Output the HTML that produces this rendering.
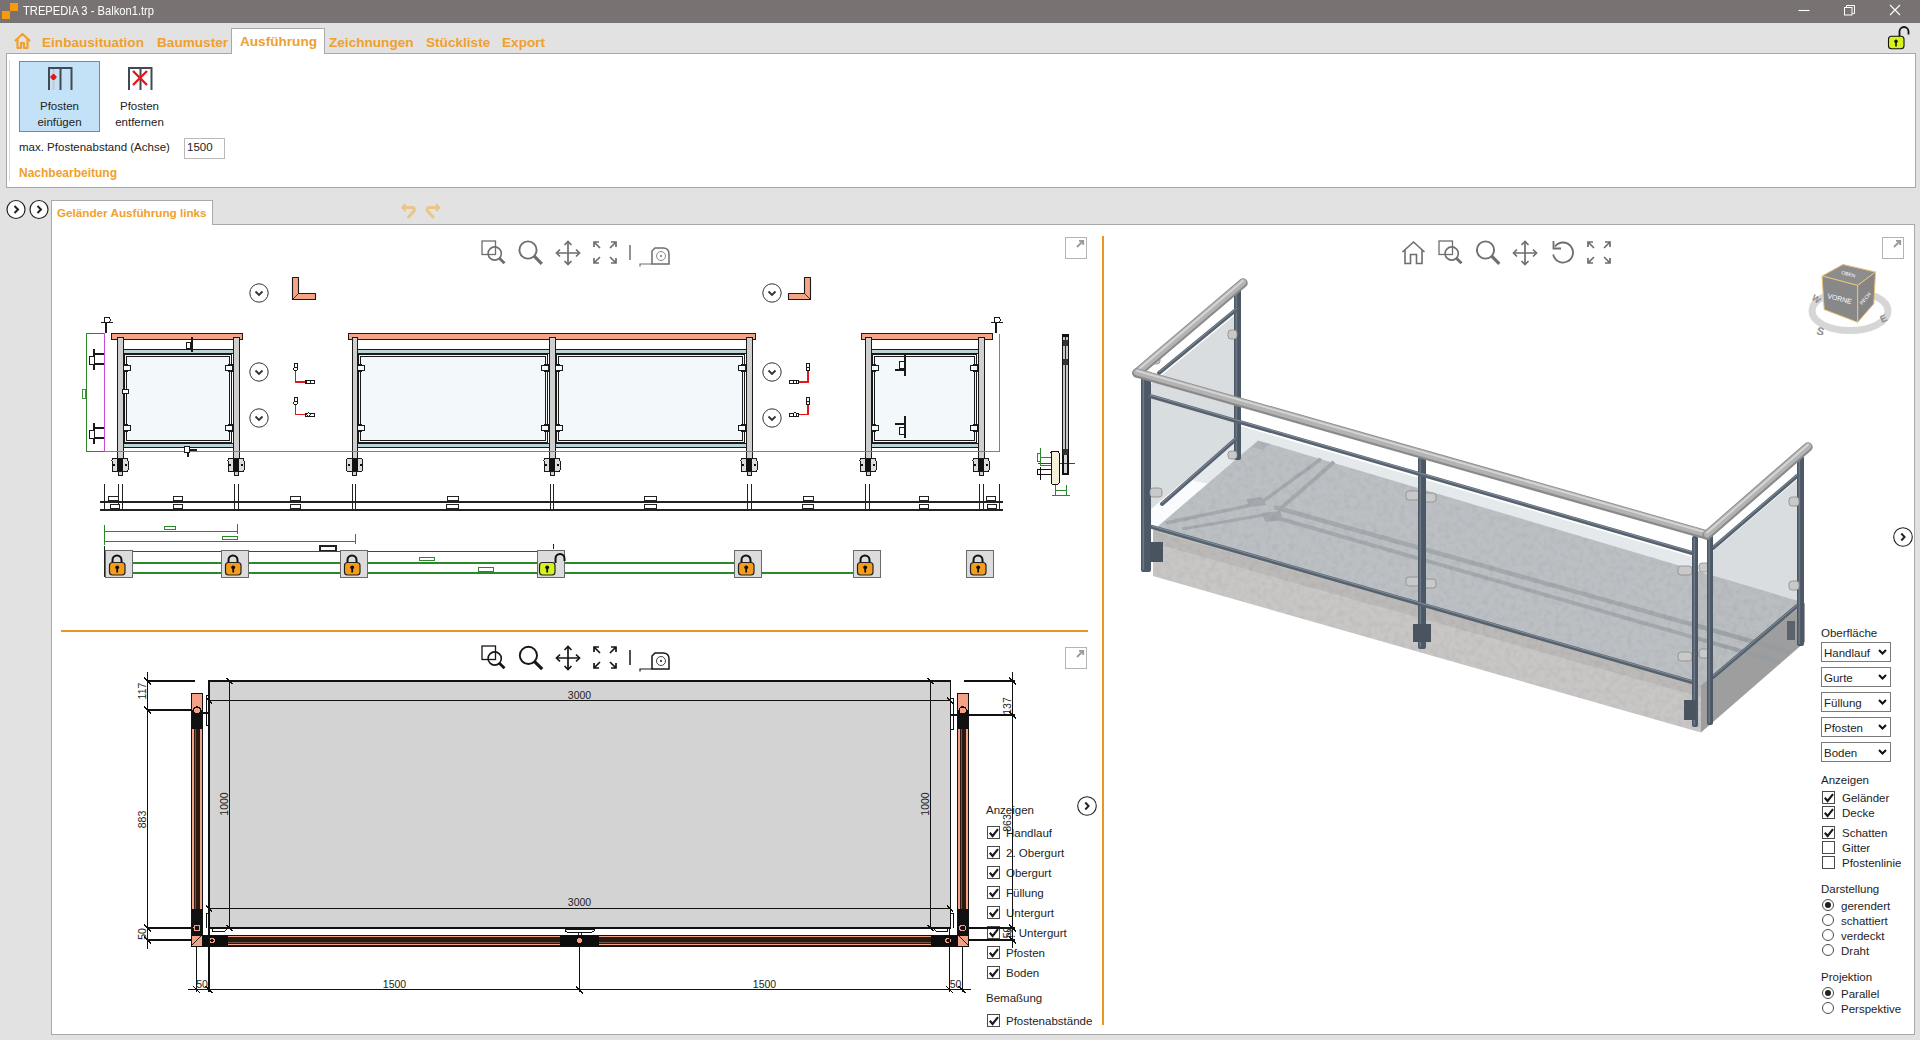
<!DOCTYPE html>
<html><head><meta charset="utf-8">
<style>
*{margin:0;padding:0;box-sizing:border-box}
html,body{width:1920px;height:1040px;overflow:hidden;background:#e2e2e2;font-family:"Liberation Sans",sans-serif;position:relative}
.abs{position:absolute}
#title{left:0;top:0;width:1920px;height:23px;background:#797272;color:#fff;font-size:13px}
#tabs{left:0;top:23px;width:1920px;height:30px}
.tab{position:absolute;top:12px;font-weight:bold;font-size:13.6px;color:#f0a02c;white-space:nowrap}
#ribbon{left:6px;top:53px;width:1910px;height:135px;background:#fff;border:1px solid #a9a9a9}
#doctab{left:51px;top:200px;width:162px;height:25px;background:#fff;border:1px solid #a9a9a9;border-bottom:none}
#main{left:51px;top:224px;width:1864px;height:811px;background:#fff;border:1px solid #a9a9a9}
.t{position:absolute;white-space:nowrap;font-size:12px;color:#222}
.l{position:absolute;white-space:nowrap;font-size:11.5px;line-height:14px;color:#1e1e1e}
.cb{position:absolute;width:13px;height:13px;border:1px solid #4a4a4a;background:#fff}
.combo{position:absolute;left:1821px;width:70px;height:20px;border:1px solid #7a7a7a;background:#fff}
.rb{position:absolute;width:12px;height:12px;border:1px solid #4d4d4d;border-radius:50%;background:#fff}
</style></head>
<body>
<div id="title" class="abs">
  <div class="abs" style="left:2px;top:11px;width:8px;height:8px;background:#f59a0f"></div>
  <div class="abs" style="left:10px;top:3px;width:8px;height:8px;background:#f59a0f"></div>
  <div class="abs" style="left:23px;top:4px;font-size:12.5px;transform:scaleX(0.894);transform-origin:0 0">TREPEDIA 3 - Balkon1.trp</div>
</div>
<div id="tabs" class="abs">
  <svg class="abs" style="left:13px;top:9px" width="19" height="18" viewBox="0 0 19 18"><path d="M2.5 8.5 L9.5 2 L16.5 8.5 M4.5 7 V16 H8 V11 H11 V16 H14.5 V7" fill="none" stroke="#f0a02c" stroke-width="2.2" stroke-linejoin="round" stroke-linecap="round"/></svg>
  <div class="tab" style="left:42px">Einbausituation</div>
  <div class="tab" style="left:157px">Baumuster</div>
  <div class="abs" style="left:231px;top:5px;width:94px;height:26px;background:#fff;border:1px solid #a9a9a9;border-bottom:none;z-index:2"></div>
  <div class="tab" style="left:240px;top:11px;z-index:3">Ausführung</div>
  <div class="tab" style="left:329px">Zeichnungen</div>
  <div class="tab" style="left:426px">Stückliste</div>
  <div class="tab" style="left:502px">Export</div>
</div>
<div id="ribbon" class="abs">
  <div class="abs" style="left:2px;top:6px;width:1px;height:121px;background:#ecd9a8"></div>
  <div class="abs" style="left:12px;top:7px;width:81px;height:71px;background:#c4e2f7;border:1px solid #5e8fba"></div>
  <svg class="abs" style="left:40px;top:12px" width="26" height="25" viewBox="0 0 26 25">
    <path d="M2 24 V2 H24.5 V24 M13.5 2 V24" fill="none" stroke="#414a52" stroke-width="2"/>
    <rect x="5.5" y="3" width="2" height="21" fill="#c7c7c7"/>
    <circle cx="6.5" cy="11" r="2.6" fill="#e8151b"/><rect x="3.5" y="10" width="6" height="2" fill="#e8151b"/><rect x="5.5" y="8" width="2" height="6" fill="#e8151b"/>
  </svg>
  <div class="t" style="left:12px;width:81px;text-align:center;top:44px;font-size:11.5px;line-height:16px">Pfosten<br>einfügen</div>
  <svg class="abs" style="left:120px;top:12px" width="26" height="25" viewBox="0 0 26 25">
    <path d="M2 24 V2 H24.5 V24 M13.5 2 V24" fill="none" stroke="#414a52" stroke-width="2"/>
    <path d="M6 5 L20 19 M20 5 L6 19" stroke="#e8151b" stroke-width="2.4"/>
  </svg>
  <div class="t" style="left:92px;width:81px;text-align:center;top:44px;font-size:11.5px;line-height:16px">Pfosten<br>entfernen</div>
  <div class="t" style="left:12px;top:87px;font-size:11.5px">max. Pfostenabstand (Achse)</div>
  <div class="abs" style="left:177px;top:84px;width:41px;height:21px;border:1px solid #b9b9b9;background:#fff"></div>
  <div class="t" style="left:180px;top:87px;font-size:11.5px">1500</div>
  <div class="t" style="left:12px;top:112px;font-size:12px;font-weight:bold;color:#f0a02c">Nachbearbeitung</div>
</div>
<div id="doctab" class="abs" style="z-index:2"><div class="abs" style="left:0;top:23px;width:160px;height:3px;background:#fff"></div>
  <div class="t" style="left:5px;top:5px;font-size:11.7px;font-weight:bold;color:#f0a02c">Geländer Ausführung links</div></div>
<svg class="abs" style="left:6px;top:199px" width="44" height="21" viewBox="0 0 44 21">
  <circle cx="10" cy="10.5" r="9" fill="#fff" stroke="#222" stroke-width="1.2"/><path d="M8.5 7 L12 10.5 L8.5 14" fill="none" stroke="#222" stroke-width="2"/>
  <circle cx="33" cy="10.5" r="9" fill="#fff" stroke="#222" stroke-width="1.2"/><path d="M31.5 7 L35 10.5 L31.5 14" fill="none" stroke="#222" stroke-width="2"/>
</svg>
<svg class="abs" style="left:398px;top:198px" width="46" height="22" viewBox="398 198 46 22">
  <path d="M403 207.5 H412 Q415.5 207.5 414 211 L408.5 217" fill="none" stroke="#eac489" stroke-width="3" stroke-linecap="round"/>
  <path d="M405.5 204 L402.5 207.5 L405.5 211" fill="none" stroke="#eac489" stroke-width="2"/>
  <path d="M438.5 207.5 H429.5 Q426 207.5 427.5 211 L433 217" fill="none" stroke="#eac489" stroke-width="3" stroke-linecap="round"/>
  <path d="M436 204 L439 207.5 L436 211" fill="none" stroke="#eac489" stroke-width="2"/>
</svg>
<div id="main" class="abs"></div>
<!--CHROME-->
<svg class="abs" style="left:1790px;top:0" width="130" height="56" viewBox="1790 0 130 56">
  <path d="M1798.5 10.5 H1809.5" stroke="#fff" stroke-width="1.1"/>
  <path d="M1846.5 7 V5.5 H1854.5 V13.5 H1852.5" fill="none" stroke="#fff" stroke-width="1"/>
  <rect x="1844.5" y="7.5" width="7.5" height="7.5" fill="none" stroke="#fff" stroke-width="1"/>
  <path d="M1890 5 L1900 15 M1900 5 L1890 15" stroke="#fff" stroke-width="1.1"/>
  <path d="M1899.5 37 V31.5 A4.5 4.5 0 0 1 1908.5 31.5 V34.5" fill="none" stroke="#111" stroke-width="1.8"/>
  <rect x="1888.5" y="36.3" width="15.5" height="12.5" rx="3" fill="#d7f21a" stroke="#111" stroke-width="1.1"/>
  <circle cx="1896" cy="41.3" r="1.7" fill="#111"/><rect x="1895.2" y="41.5" width="1.6" height="5" fill="#111"/>
</svg>
<div class="abs" style="left:61px;top:630px;width:1027px;height:2px;background:#e8961e"></div>
<div class="abs" style="left:1102px;top:236px;width:2px;height:789px;background:#e8961e"></div>
<svg class="abs" style="left:1065px;top:237px" width="22" height="22" viewBox="0 0 22 22"><rect x="0.5" y="0.5" width="21" height="21" fill="#fff" stroke="#b4b4b4"/><path d="M12 10 L18 4 M14 3.8 H18.2 V8" fill="none" stroke="#9a9a9a" stroke-width="1.8"/></svg>
<svg class="abs" style="left:1065px;top:647px" width="22" height="22" viewBox="0 0 22 22"><rect x="0.5" y="0.5" width="21" height="21" fill="#fff" stroke="#b4b4b4"/><path d="M12 10 L18 4 M14 3.8 H18.2 V8" fill="none" stroke="#9a9a9a" stroke-width="1.8"/></svg>
<svg class="abs" style="left:1882px;top:237px" width="22" height="22" viewBox="0 0 22 22"><rect x="0.5" y="0.5" width="21" height="21" fill="#fff" stroke="#b4b4b4"/><path d="M12 10 L18 4 M14 3.8 H18.2 V8" fill="none" stroke="#9a9a9a" stroke-width="1.8"/></svg>
<svg class="abs" style="left:1075.5px;top:794.5px" width="22" height="22" viewBox="0 0 22 22"><circle cx="11" cy="11" r="9.3" fill="#fff" stroke="#222" stroke-width="1.1"/><path d="M9.3 7.5 L12.6 11 L9.3 14.5" fill="none" stroke="#222" stroke-width="1.9"/></svg>
<svg class="abs" style="left:1892px;top:526px" width="22" height="22" viewBox="0 0 22 22"><circle cx="11" cy="11" r="9.3" fill="#fff" stroke="#222" stroke-width="1.1"/><path d="M9.3 7.5 L12.6 11 L9.3 14.5" fill="none" stroke="#222" stroke-width="1.9"/></svg>
<div class="l" style="left:1821px;top:626px;">Oberfläche</div>
<div class="combo" style="top:642px"></div><div class="l" style="left:1824px;top:646px;">Handlauf</div><svg class="abs" style="left:1878px;top:649px" width="9" height="6" viewBox="0 0 9 6"><path d="M1 1 L4.5 4.5 L8 1" fill="none" stroke="#111" stroke-width="2"/></svg>
<div class="combo" style="top:667px"></div><div class="l" style="left:1824px;top:671px;">Gurte</div><svg class="abs" style="left:1878px;top:674px" width="9" height="6" viewBox="0 0 9 6"><path d="M1 1 L4.5 4.5 L8 1" fill="none" stroke="#111" stroke-width="2"/></svg>
<div class="combo" style="top:692px"></div><div class="l" style="left:1824px;top:696px;">Füllung</div><svg class="abs" style="left:1878px;top:699px" width="9" height="6" viewBox="0 0 9 6"><path d="M1 1 L4.5 4.5 L8 1" fill="none" stroke="#111" stroke-width="2"/></svg>
<div class="combo" style="top:717px"></div><div class="l" style="left:1824px;top:721px;">Pfosten</div><svg class="abs" style="left:1878px;top:724px" width="9" height="6" viewBox="0 0 9 6"><path d="M1 1 L4.5 4.5 L8 1" fill="none" stroke="#111" stroke-width="2"/></svg>
<div class="combo" style="top:742px"></div><div class="l" style="left:1824px;top:746px;">Boden</div><svg class="abs" style="left:1878px;top:749px" width="9" height="6" viewBox="0 0 9 6"><path d="M1 1 L4.5 4.5 L8 1" fill="none" stroke="#111" stroke-width="2"/></svg>
<div class="l" style="left:1821px;top:773px;">Anzeigen</div>
<div class="cb" style="left:1822px;top:791px"><svg width="11" height="11" style="position:absolute;left:0;top:0" viewBox="0 0 11 11"><path d="M1.8 5.8 L4.6 9 L10 2.2" fill="none" stroke="#1a1a1a" stroke-width="2.1"/></svg></div>
<div class="l" style="left:1842px;top:791px;">Geländer</div>
<div class="cb" style="left:1822px;top:806px"><svg width="11" height="11" style="position:absolute;left:0;top:0" viewBox="0 0 11 11"><path d="M1.8 5.8 L4.6 9 L10 2.2" fill="none" stroke="#1a1a1a" stroke-width="2.1"/></svg></div>
<div class="l" style="left:1842px;top:806px;">Decke</div>
<div class="cb" style="left:1822px;top:826px"><svg width="11" height="11" style="position:absolute;left:0;top:0" viewBox="0 0 11 11"><path d="M1.8 5.8 L4.6 9 L10 2.2" fill="none" stroke="#1a1a1a" stroke-width="2.1"/></svg></div>
<div class="l" style="left:1842px;top:826px;">Schatten</div>
<div class="cb" style="left:1822px;top:841px"></div>
<div class="l" style="left:1842px;top:841px;">Gitter</div>
<div class="cb" style="left:1822px;top:856px"></div>
<div class="l" style="left:1842px;top:856px;">Pfostenlinie</div>
<div class="l" style="left:1821px;top:882px;">Darstellung</div>
<div class="rb" style="left:1822px;top:899px"><div style="position:absolute;left:2px;top:2px;width:6px;height:6px;border-radius:50%;background:#222"></div></div>
<div class="l" style="left:1841px;top:899px;">gerendert</div>
<div class="rb" style="left:1822px;top:914px"></div>
<div class="l" style="left:1841px;top:914px;">schattiert</div>
<div class="rb" style="left:1822px;top:929px"></div>
<div class="l" style="left:1841px;top:929px;">verdeckt</div>
<div class="rb" style="left:1822px;top:944px"></div>
<div class="l" style="left:1841px;top:944px;">Draht</div>
<div class="l" style="left:1821px;top:970px;">Projektion</div>
<div class="rb" style="left:1822px;top:987px"><div style="position:absolute;left:2px;top:2px;width:6px;height:6px;border-radius:50%;background:#222"></div></div>
<div class="l" style="left:1841px;top:987px;">Parallel</div>
<div class="rb" style="left:1822px;top:1002px"></div>
<div class="l" style="left:1841px;top:1002px;">Perspektive</div>
<div class="l" style="left:986px;top:803px;">Anzeigen</div>
<div class="cb" style="left:987px;top:826px"><svg width="11" height="11" style="position:absolute;left:0;top:0" viewBox="0 0 11 11"><path d="M1.8 5.8 L4.6 9 L10 2.2" fill="none" stroke="#1a1a1a" stroke-width="2.1"/></svg></div>
<div class="l" style="left:1006px;top:826px;">Handlauf</div>
<div class="cb" style="left:987px;top:846px"><svg width="11" height="11" style="position:absolute;left:0;top:0" viewBox="0 0 11 11"><path d="M1.8 5.8 L4.6 9 L10 2.2" fill="none" stroke="#1a1a1a" stroke-width="2.1"/></svg></div>
<div class="l" style="left:1006px;top:846px;">2. Obergurt</div>
<div class="cb" style="left:987px;top:866px"><svg width="11" height="11" style="position:absolute;left:0;top:0" viewBox="0 0 11 11"><path d="M1.8 5.8 L4.6 9 L10 2.2" fill="none" stroke="#1a1a1a" stroke-width="2.1"/></svg></div>
<div class="l" style="left:1006px;top:866px;">Obergurt</div>
<div class="cb" style="left:987px;top:886px"><svg width="11" height="11" style="position:absolute;left:0;top:0" viewBox="0 0 11 11"><path d="M1.8 5.8 L4.6 9 L10 2.2" fill="none" stroke="#1a1a1a" stroke-width="2.1"/></svg></div>
<div class="l" style="left:1006px;top:886px;">Füllung</div>
<div class="cb" style="left:987px;top:906px"><svg width="11" height="11" style="position:absolute;left:0;top:0" viewBox="0 0 11 11"><path d="M1.8 5.8 L4.6 9 L10 2.2" fill="none" stroke="#1a1a1a" stroke-width="2.1"/></svg></div>
<div class="l" style="left:1006px;top:906px;">Untergurt</div>
<div class="cb" style="left:987px;top:926px"><svg width="11" height="11" style="position:absolute;left:0;top:0" viewBox="0 0 11 11"><path d="M1.8 5.8 L4.6 9 L10 2.2" fill="none" stroke="#1a1a1a" stroke-width="2.1"/></svg></div>
<div class="l" style="left:1006px;top:926px;">2. Untergurt</div>
<div class="cb" style="left:987px;top:946px"><svg width="11" height="11" style="position:absolute;left:0;top:0" viewBox="0 0 11 11"><path d="M1.8 5.8 L4.6 9 L10 2.2" fill="none" stroke="#1a1a1a" stroke-width="2.1"/></svg></div>
<div class="l" style="left:1006px;top:946px;">Pfosten</div>
<div class="cb" style="left:987px;top:966px"><svg width="11" height="11" style="position:absolute;left:0;top:0" viewBox="0 0 11 11"><path d="M1.8 5.8 L4.6 9 L10 2.2" fill="none" stroke="#1a1a1a" stroke-width="2.1"/></svg></div>
<div class="l" style="left:1006px;top:966px;">Boden</div>
<div class="l" style="left:986px;top:991px;">Bemaßung</div>
<div class="cb" style="left:987px;top:1014px"><svg width="11" height="11" style="position:absolute;left:0;top:0" viewBox="0 0 11 11"><path d="M1.8 5.8 L4.6 9 L10 2.2" fill="none" stroke="#1a1a1a" stroke-width="2.1"/></svg></div>
<div class="l" style="left:1006px;top:1014px;">Pfostenabstände</div>
<svg class="abs" style="left:0;top:0" width="1920" height="1040" viewBox="0 0 1920 1040"><rect x="482" y="241" width="13.5" height="13.5" fill="none" stroke="#6e6e6e" stroke-width="1.3"/><circle cx="494.7" cy="253.5" r="6.6" fill="none" stroke="#6e6e6e" stroke-width="1.6"/><path d="M499.2 258 L504.5 263.3" stroke="#6e6e6e" stroke-width="2.8"/><circle cx="528" cy="250" r="8.6" fill="none" stroke="#6e6e6e" stroke-width="1.9"/><path d="M534.2 256.2 L541.8 263.8" stroke="#6e6e6e" stroke-width="3.2"/><path d="M556.5 253 H579.5 M568 241.5 V264.5" stroke="#6e6e6e" stroke-width="1.7"/><path d="M560.0 249.5 L556.5 253 L560.0 256.5 M576.0 249.5 L579.5 253 L576.0 256.5 M564.5 245.0 L568 241.5 L571.5 245.0 M564.5 261.0 L568 264.5 L571.5 261.0" fill="none" stroke="#6e6e6e" stroke-width="1.7"/><path d="M594 242 L600 248 M594 247 V242 H599 M616 242 L610 248 M611 242 H616 V247 M594 263 L600 257 M594 258 V263 H599 M616 263 L610 257 M611 263 H616 V258" fill="none" stroke="#6e6e6e" stroke-width="1.7"/><path d="M630 245 V260" stroke="#6e6e6e" stroke-width="1.5"/><path d="M652 264 V251 L655 248 H663 Q669 248 669 254 V264 Z" fill="none" stroke="#6e6e6e" stroke-width="1.5"/><circle cx="661" cy="256" r="4.5" fill="none" stroke="#6e6e6e" stroke-width="0.8"/><circle cx="661" cy="256" r="1" fill="#6e6e6e"/><path d="M652 264 H640 V266.5" fill="none" stroke="#6e6e6e" stroke-width="1.2"/><rect x="482" y="646" width="13.5" height="13.5" fill="none" stroke="#161616" stroke-width="1.3"/><circle cx="494.7" cy="658.5" r="6.6" fill="none" stroke="#161616" stroke-width="1.6"/><path d="M499.2 663 L504.5 668.3" stroke="#161616" stroke-width="2.8"/><circle cx="528.4" cy="655.4" r="8.6" fill="none" stroke="#161616" stroke-width="1.9"/><path d="M534.6 661.6 L542.1999999999999 669.1999999999999" stroke="#161616" stroke-width="3.2"/><path d="M556.5 658 H579.5 M568 646.5 V669.5" stroke="#161616" stroke-width="1.7"/><path d="M560.0 654.5 L556.5 658 L560.0 661.5 M576.0 654.5 L579.5 658 L576.0 661.5 M564.5 650.0 L568 646.5 L571.5 650.0 M564.5 666.0 L568 669.5 L571.5 666.0" fill="none" stroke="#161616" stroke-width="1.7"/><path d="M594 647 L600 653 M594 652 V647 H599 M616 647 L610 653 M611 647 H616 V652 M594 668 L600 662 M594 663 V668 H599 M616 668 L610 662 M611 668 H616 V663" fill="none" stroke="#161616" stroke-width="1.7"/><path d="M630 650 V665" stroke="#161616" stroke-width="1.5"/><path d="M652 669 V656 L655 653 H663 Q669 653 669 659 V669 Z" fill="none" stroke="#161616" stroke-width="1.5"/><circle cx="661" cy="661" r="4.5" fill="none" stroke="#161616" stroke-width="0.8"/><circle cx="661" cy="661" r="1" fill="#161616"/><path d="M652 669 H640 V671.5" fill="none" stroke="#161616" stroke-width="1.2"/><path d="M1402.5 252 L1413.5 242 L1424.5 252 M1405 250 V263.5 H1410.5 V254.5 H1416.5 V263.5 H1422 V250" fill="none" stroke="#6e6e6e" stroke-width="1.6" stroke-linejoin="miter"/><rect x="1439" y="241" width="13.5" height="13.5" fill="none" stroke="#6e6e6e" stroke-width="1.3"/><circle cx="1451.7" cy="253.5" r="6.6" fill="none" stroke="#6e6e6e" stroke-width="1.6"/><path d="M1456.2 258 L1461.5 263.3" stroke="#6e6e6e" stroke-width="2.8"/><circle cx="1485.5" cy="250" r="8.6" fill="none" stroke="#6e6e6e" stroke-width="1.9"/><path d="M1491.7 256.2 L1499.3 263.8" stroke="#6e6e6e" stroke-width="3.2"/><path d="M1513.5 253 H1536.5 M1525 241.5 V264.5" stroke="#6e6e6e" stroke-width="1.7"/><path d="M1517.0 249.5 L1513.5 253 L1517.0 256.5 M1533.0 249.5 L1536.5 253 L1533.0 256.5 M1521.5 245.0 L1525 241.5 L1528.5 245.0 M1521.5 261.0 L1525 264.5 L1528.5 261.0" fill="none" stroke="#6e6e6e" stroke-width="1.7"/><path d="M1555 246.5 A10 10 0 1 1 1553.2 254.5" fill="none" stroke="#6e6e6e" stroke-width="1.8"/><path d="M1553.5 241 V248.5 H1561" fill="none" stroke="#6e6e6e" stroke-width="1.8"/><path d="M1588 242 L1594 248 M1588 247 V242 H1593 M1610 242 L1604 248 M1605 242 H1610 V247 M1588 263 L1594 257 M1588 258 V263 H1593 M1610 263 L1604 257 M1605 263 H1610 V258" fill="none" stroke="#6e6e6e" stroke-width="1.7"/></svg>
<svg class="abs" style="left:1800px;top:255px" width="100" height="80" viewBox="1800 255 100 80">
<ellipse cx="1850" cy="311" rx="38" ry="19.5" fill="none" stroke="#d6d6d6" stroke-width="7"/>
<polygon points="1822,276 1843,264.5 1875.5,272 1857.7,285.4" fill="#8d8d8d" stroke="#e6c37a" stroke-width="1"/>
<polygon points="1822,276 1857.7,285.4 1857.7,322.3 1824.2,309.6" fill="#888" stroke="#e6c37a" stroke-width="1"/>
<polygon points="1857.7,285.4 1875.5,272 1873.8,303.8 1857.7,322.3" fill="#858585" stroke="#e6c37a" stroke-width="1"/>
<text x="1827" y="298" font-family="Liberation Sans" font-size="7" fill="#fff" transform="rotate(14 1827 298)">VORNE</text>
<text x="1862" y="305" font-family="Liberation Sans" font-size="5" fill="#fff" transform="rotate(-50 1862 305)">RECH</text>
<text x="1841" y="274" font-family="Liberation Sans" font-size="5" fill="#fff" transform="rotate(15 1841 274)">OBEN</text>
<text x="1811" y="299" font-family="Liberation Sans" font-size="9" font-weight="bold" fill="#8e8e8e" transform="rotate(35 1811 299)">W</text>
<text x="1816" y="334" font-family="Liberation Sans" font-size="11" font-weight="bold" fill="#8e8e8e" transform="rotate(15 1816 334)">S</text>
<text x="1882" y="323" font-family="Liberation Sans" font-size="10" font-weight="bold" fill="#8e8e8e" transform="rotate(-25 1882 323)">E</text>
</svg>
<!--/CHROME-->
<!--TOP2D-->
<svg class="abs" style="left:0;top:0" width="1920" height="1040" viewBox="0 0 1920 1040" shape-rendering="crispEdges">
<rect x="123" y="349" width="110" height="5" fill="#1a1a1a"/><rect x="123" y="350" width="110" height="3" fill="#bcd3d8"/>
<rect x="123" y="443" width="110" height="5" fill="#1a1a1a"/><rect x="123" y="444" width="110" height="3" fill="#bcd3d8"/>
<rect x="124.5" y="354.5" width="107" height="87.5" fill="#f3f8fb" stroke="#1a1a1a" stroke-width="1"/>
<rect x="126.5" y="356.5" width="103" height="83.5" fill="none" stroke="#1a1a1a" stroke-width="1"/>
<path d="M123 365 H128 A3 3 0 0 1 128 371 H123 Z" fill="#f3f8fb" stroke="#1a1a1a" stroke-width="1.1"/>
<path d="M233 365 H228 A3 3 0 0 0 228 371 H233 Z" fill="#f3f8fb" stroke="#1a1a1a" stroke-width="1.1"/>
<path d="M123 425 H128 A3 3 0 0 1 128 431 H123 Z" fill="#f3f8fb" stroke="#1a1a1a" stroke-width="1.1"/>
<path d="M233 425 H228 A3 3 0 0 0 228 431 H233 Z" fill="#f3f8fb" stroke="#1a1a1a" stroke-width="1.1"/>
<rect x="357" y="349" width="192" height="5" fill="#1a1a1a"/><rect x="357" y="350" width="192" height="3" fill="#bcd3d8"/>
<rect x="357" y="443" width="192" height="5" fill="#1a1a1a"/><rect x="357" y="444" width="192" height="3" fill="#bcd3d8"/>
<rect x="358.5" y="354.5" width="189" height="87.5" fill="#f3f8fb" stroke="#1a1a1a" stroke-width="1"/>
<rect x="360.5" y="356.5" width="185" height="83.5" fill="none" stroke="#1a1a1a" stroke-width="1"/>
<path d="M357 365 H362 A3 3 0 0 1 362 371 H357 Z" fill="#f3f8fb" stroke="#1a1a1a" stroke-width="1.1"/>
<path d="M549 365 H544 A3 3 0 0 0 544 371 H549 Z" fill="#f3f8fb" stroke="#1a1a1a" stroke-width="1.1"/>
<path d="M357 425 H362 A3 3 0 0 1 362 431 H357 Z" fill="#f3f8fb" stroke="#1a1a1a" stroke-width="1.1"/>
<path d="M549 425 H544 A3 3 0 0 0 544 431 H549 Z" fill="#f3f8fb" stroke="#1a1a1a" stroke-width="1.1"/>
<rect x="555" y="349" width="191" height="5" fill="#1a1a1a"/><rect x="555" y="350" width="191" height="3" fill="#bcd3d8"/>
<rect x="555" y="443" width="191" height="5" fill="#1a1a1a"/><rect x="555" y="444" width="191" height="3" fill="#bcd3d8"/>
<rect x="556.5" y="354.5" width="188" height="87.5" fill="#f3f8fb" stroke="#1a1a1a" stroke-width="1"/>
<rect x="558.5" y="356.5" width="184" height="83.5" fill="none" stroke="#1a1a1a" stroke-width="1"/>
<path d="M555 365 H560 A3 3 0 0 1 560 371 H555 Z" fill="#f3f8fb" stroke="#1a1a1a" stroke-width="1.1"/>
<path d="M746 365 H741 A3 3 0 0 0 741 371 H746 Z" fill="#f3f8fb" stroke="#1a1a1a" stroke-width="1.1"/>
<path d="M555 425 H560 A3 3 0 0 1 560 431 H555 Z" fill="#f3f8fb" stroke="#1a1a1a" stroke-width="1.1"/>
<path d="M746 425 H741 A3 3 0 0 0 741 431 H746 Z" fill="#f3f8fb" stroke="#1a1a1a" stroke-width="1.1"/>
<rect x="871" y="349" width="107" height="5" fill="#1a1a1a"/><rect x="871" y="350" width="107" height="3" fill="#bcd3d8"/>
<rect x="871" y="443" width="107" height="5" fill="#1a1a1a"/><rect x="871" y="444" width="107" height="3" fill="#bcd3d8"/>
<rect x="872.5" y="354.5" width="104" height="87.5" fill="#f3f8fb" stroke="#1a1a1a" stroke-width="1"/>
<rect x="874.5" y="356.5" width="100" height="83.5" fill="none" stroke="#1a1a1a" stroke-width="1"/>
<path d="M871 365 H876 A3 3 0 0 1 876 371 H871 Z" fill="#f3f8fb" stroke="#1a1a1a" stroke-width="1.1"/>
<path d="M978 365 H973 A3 3 0 0 0 973 371 H978 Z" fill="#f3f8fb" stroke="#1a1a1a" stroke-width="1.1"/>
<path d="M871 425 H876 A3 3 0 0 1 876 431 H871 Z" fill="#f3f8fb" stroke="#1a1a1a" stroke-width="1.1"/>
<path d="M978 425 H973 A3 3 0 0 0 973 431 H978 Z" fill="#f3f8fb" stroke="#1a1a1a" stroke-width="1.1"/>
<rect x="111" y="333" width="132" height="7" fill="#1a1a1a"/><rect x="112" y="334" width="130" height="5" fill="#f4a487"/>
<rect x="348" y="333" width="408" height="7" fill="#1a1a1a"/><rect x="349" y="334" width="406" height="5" fill="#f4a487"/>
<rect x="861" y="333" width="132" height="7" fill="#1a1a1a"/><rect x="862" y="334" width="130" height="5" fill="#f4a487"/>
<rect x="117" y="337" width="7" height="134" fill="#1a1a1a"/><rect x="118" y="338" width="5" height="132" fill="#cfcfcf"/>
<rect x="112.0" y="458.5" width="16" height="13" rx="2" fill="#dcdcdc" stroke="#1a1a1a" stroke-width="1"/>
<rect x="117.0" y="458.5" width="6" height="13" fill="#111"/>
<rect x="118.0" y="471.5" width="4" height="4" fill="#cfcfcf" stroke="#1a1a1a" stroke-width="1"/>
<path d="M113.0 465 H115.0 M125.0 465 H127.0" stroke="#111" stroke-width="2"/>
<rect x="233" y="337" width="7" height="134" fill="#1a1a1a"/><rect x="234" y="338" width="5" height="132" fill="#cfcfcf"/>
<rect x="228.0" y="458.5" width="16" height="13" rx="2" fill="#dcdcdc" stroke="#1a1a1a" stroke-width="1"/>
<rect x="233.0" y="458.5" width="6" height="13" fill="#111"/>
<rect x="234.0" y="471.5" width="4" height="4" fill="#cfcfcf" stroke="#1a1a1a" stroke-width="1"/>
<path d="M229.0 465 H231.0 M241.0 465 H243.0" stroke="#111" stroke-width="2"/>
<rect x="352" y="337" width="6" height="134" fill="#1a1a1a"/><rect x="353" y="338" width="4" height="132" fill="#cfcfcf"/>
<rect x="346.5" y="458.5" width="16" height="13" rx="2" fill="#dcdcdc" stroke="#1a1a1a" stroke-width="1"/>
<rect x="351.5" y="458.5" width="6" height="13" fill="#111"/>
<rect x="352.5" y="471.5" width="4" height="4" fill="#cfcfcf" stroke="#1a1a1a" stroke-width="1"/>
<path d="M347.5 465 H349.5 M359.5 465 H361.5" stroke="#111" stroke-width="2"/>
<rect x="549" y="337" width="7" height="134" fill="#1a1a1a"/><rect x="550" y="338" width="5" height="132" fill="#cfcfcf"/>
<rect x="544.0" y="458.5" width="16" height="13" rx="2" fill="#dcdcdc" stroke="#1a1a1a" stroke-width="1"/>
<rect x="549.0" y="458.5" width="6" height="13" fill="#111"/>
<rect x="550.0" y="471.5" width="4" height="4" fill="#cfcfcf" stroke="#1a1a1a" stroke-width="1"/>
<path d="M545.0 465 H547.0 M557.0 465 H559.0" stroke="#111" stroke-width="2"/>
<rect x="746" y="337" width="7" height="134" fill="#1a1a1a"/><rect x="747" y="338" width="5" height="132" fill="#cfcfcf"/>
<rect x="741.0" y="458.5" width="16" height="13" rx="2" fill="#dcdcdc" stroke="#1a1a1a" stroke-width="1"/>
<rect x="746.0" y="458.5" width="6" height="13" fill="#111"/>
<rect x="747.0" y="471.5" width="4" height="4" fill="#cfcfcf" stroke="#1a1a1a" stroke-width="1"/>
<path d="M742.0 465 H744.0 M754.0 465 H756.0" stroke="#111" stroke-width="2"/>
<rect x="865" y="337" width="7" height="134" fill="#1a1a1a"/><rect x="866" y="338" width="5" height="132" fill="#cfcfcf"/>
<rect x="860.0" y="458.5" width="16" height="13" rx="2" fill="#dcdcdc" stroke="#1a1a1a" stroke-width="1"/>
<rect x="865.0" y="458.5" width="6" height="13" fill="#111"/>
<rect x="866.0" y="471.5" width="4" height="4" fill="#cfcfcf" stroke="#1a1a1a" stroke-width="1"/>
<path d="M861.0 465 H863.0 M873.0 465 H875.0" stroke="#111" stroke-width="2"/>
<rect x="978" y="337" width="7" height="134" fill="#1a1a1a"/><rect x="979" y="338" width="5" height="132" fill="#cfcfcf"/>
<rect x="973.0" y="458.5" width="16" height="13" rx="2" fill="#dcdcdc" stroke="#1a1a1a" stroke-width="1"/>
<rect x="978.0" y="458.5" width="6" height="13" fill="#111"/>
<rect x="979.0" y="471.5" width="4" height="4" fill="#cfcfcf" stroke="#1a1a1a" stroke-width="1"/>
<path d="M974.0 465 H976.0 M986.0 465 H988.0" stroke="#111" stroke-width="2"/>
<path d="M104.5 333 V451.5 H999.5 V334" fill="none" stroke="#cc48d8" stroke-width="1.2"/>
<path d="M86 333 V451 M86 333 H104 M86 451 H104" fill="none" stroke="#2a8a2a" stroke-width="1"/>
<rect x="82" y="389" width="3.5" height="9" fill="#fff" stroke="#2a8a2a" stroke-width="0.9"/>
<path d="M104 354 H95 M104 364 H95 M94 349 V370" fill="none" stroke="#1a1a1a" stroke-width="1.2"/>
<rect x="89" y="356" width="5" height="8" fill="#fff" stroke="#1a1a1a" stroke-width="1"/>
<path d="M104 428 H95 M104 438 H95 M94 423 V444" fill="none" stroke="#1a1a1a" stroke-width="1.2"/>
<rect x="89" y="430" width="5" height="8" fill="#fff" stroke="#1a1a1a" stroke-width="1"/>
<path d="M101 322.5 H113 M106 320 V333" fill="none" stroke="#1a1a1a" stroke-width="1.1"/>
<rect x="104" y="317.5" width="6" height="5" rx="1.5" fill="#fff" stroke="#1a1a1a" stroke-width="1"/>
<path d="M991 322.5 H1003 M996 320 V333" fill="none" stroke="#1a1a1a" stroke-width="1.1"/>
<rect x="994" y="317.5" width="6" height="5" rx="1.5" fill="#fff" stroke="#1a1a1a" stroke-width="1"/>
<rect x="186" y="342" width="4" height="6" fill="#fff" stroke="#1a1a1a" stroke-width="1"/>
<path d="M192 337 V352 M188 448 V457 M186 450 H197" stroke="#1a1a1a" stroke-width="1.2"/>
<rect x="184" y="446" width="5" height="6" fill="#fff" stroke="#1a1a1a" stroke-width="1"/>
<rect x="122" y="389" width="6" height="4" fill="#fff" stroke="#1a1a1a" stroke-width="1"/>
<path d="M905 354 V376 M895 370 H906" fill="none" stroke="#1a1a1a" stroke-width="1.1"/>
<rect x="899" y="361" width="5" height="7" fill="#fff" stroke="#1a1a1a" stroke-width="1"/>
<path d="M905 416 V438 M895 424 H906" fill="none" stroke="#1a1a1a" stroke-width="1.1"/>
<rect x="899" y="427" width="5" height="7" fill="#fff" stroke="#1a1a1a" stroke-width="1"/>
<g shape-rendering="geometricPrecision"><circle cx="259" cy="293" r="9.2" fill="#fff" stroke="#333" stroke-width="1"/><path d="M255.5 291.5 L259 295 L262.5 291.5" fill="none" stroke="#333" stroke-width="1.8"/></g>
<g shape-rendering="geometricPrecision"><circle cx="772" cy="293" r="9.2" fill="#fff" stroke="#333" stroke-width="1"/><path d="M768.5 291.5 L772 295 L775.5 291.5" fill="none" stroke="#333" stroke-width="1.8"/></g>
<g shape-rendering="geometricPrecision"><circle cx="259" cy="372" r="9.2" fill="#fff" stroke="#333" stroke-width="1"/><path d="M255.5 370.5 L259 374 L262.5 370.5" fill="none" stroke="#333" stroke-width="1.8"/></g>
<g shape-rendering="geometricPrecision"><circle cx="772" cy="372" r="9.2" fill="#fff" stroke="#333" stroke-width="1"/><path d="M768.5 370.5 L772 374 L775.5 370.5" fill="none" stroke="#333" stroke-width="1.8"/></g>
<g shape-rendering="geometricPrecision"><circle cx="259" cy="418" r="9.2" fill="#fff" stroke="#333" stroke-width="1"/><path d="M255.5 416.5 L259 420 L262.5 416.5" fill="none" stroke="#333" stroke-width="1.8"/></g>
<g shape-rendering="geometricPrecision"><circle cx="772" cy="418" r="9.2" fill="#fff" stroke="#333" stroke-width="1"/><path d="M768.5 416.5 L772 420 L775.5 416.5" fill="none" stroke="#333" stroke-width="1.8"/></g>
<g shape-rendering="geometricPrecision"><path d="M292.5 277.5 H298.5 V293.5 H315.5 V299.5 H292.5 Z" fill="#f4a487" stroke="#1a1a1a" stroke-width="1.1" stroke-linejoin="round"/><path d="M292.5 299.5 L298.5 293.5" stroke="#1a1a1a" stroke-width="0.8"/></g>
<g shape-rendering="geometricPrecision"><path d="M788.5 299.5 V293.5 H804.5 V277.5 H810.5 V299.5 Z" fill="#f4a487" stroke="#1a1a1a" stroke-width="1.1" stroke-linejoin="round"/><path d="M810.5 299.5 L804.5 293.5" stroke="#1a1a1a" stroke-width="0.8"/></g>
<path d="M295.5 369 V382 H308.5" fill="none" stroke="#e0161b" stroke-width="1.3"/>
<rect x="294.0" y="363" width="3" height="6" fill="#fff" stroke="#1a1a1a" stroke-width="1"/><circle cx="295.5" cy="369" r="1.8" fill="#fff" stroke="#1a1a1a" stroke-width="1"/>
<rect x="305.5" y="380.5" width="9" height="3" fill="#fff" stroke="#1a1a1a" stroke-width="1"/><circle cx="308.5" cy="382" r="1.8" fill="#fff" stroke="#1a1a1a" stroke-width="1"/>
<path d="M295.5 403 V414.5 H308.5" fill="none" stroke="#e0161b" stroke-width="1.3"/>
<rect x="294.0" y="397" width="3" height="6" fill="#fff" stroke="#1a1a1a" stroke-width="1"/><circle cx="295.5" cy="403" r="1.8" fill="#fff" stroke="#1a1a1a" stroke-width="1"/>
<rect x="305.5" y="413.0" width="9" height="3" fill="#fff" stroke="#1a1a1a" stroke-width="1"/><circle cx="308.5" cy="414.5" r="1.8" fill="#fff" stroke="#1a1a1a" stroke-width="1"/>
<path d="M808 369 V382 H795" fill="none" stroke="#e0161b" stroke-width="1.3"/>
<rect x="806.5" y="363" width="3" height="6" fill="#fff" stroke="#1a1a1a" stroke-width="1"/><circle cx="808" cy="369" r="1.8" fill="#fff" stroke="#1a1a1a" stroke-width="1"/>
<rect x="789" y="380.5" width="9" height="3" fill="#fff" stroke="#1a1a1a" stroke-width="1"/><circle cx="795" cy="382" r="1.8" fill="#fff" stroke="#1a1a1a" stroke-width="1"/>
<path d="M808 403 V414.5 H795" fill="none" stroke="#e0161b" stroke-width="1.3"/>
<rect x="806.5" y="397" width="3" height="6" fill="#fff" stroke="#1a1a1a" stroke-width="1"/><circle cx="808" cy="403" r="1.8" fill="#fff" stroke="#1a1a1a" stroke-width="1"/>
<rect x="789" y="413.0" width="9" height="3" fill="#fff" stroke="#1a1a1a" stroke-width="1"/><circle cx="795" cy="414.5" r="1.8" fill="#fff" stroke="#1a1a1a" stroke-width="1"/>
<path d="M100 502 H1003 M100 510 H1003" stroke="#222" stroke-width="1.6"/>
<path d="M104.5 484 V511" stroke="#222" stroke-width="1"/>
<path d="M118 484 V511" stroke="#222" stroke-width="1"/>
<path d="M122 484 V511" stroke="#222" stroke-width="1"/>
<path d="M234 484 V511" stroke="#222" stroke-width="1"/>
<path d="M238 484 V511" stroke="#222" stroke-width="1"/>
<path d="M352 484 V511" stroke="#222" stroke-width="1"/>
<path d="M355.5 484 V511" stroke="#222" stroke-width="1"/>
<path d="M550 484 V511" stroke="#222" stroke-width="1"/>
<path d="M553 484 V511" stroke="#222" stroke-width="1"/>
<path d="M747 484 V511" stroke="#222" stroke-width="1"/>
<path d="M751 484 V511" stroke="#222" stroke-width="1"/>
<path d="M865.5 484 V511" stroke="#222" stroke-width="1"/>
<path d="M869.5 484 V511" stroke="#222" stroke-width="1"/>
<path d="M979 484 V511" stroke="#222" stroke-width="1"/>
<path d="M983.5 484 V511" stroke="#222" stroke-width="1"/>
<path d="M999.5 484 V511" stroke="#222" stroke-width="1"/>
<rect x="108" y="496.5" width="10" height="4" fill="#fff" stroke="#222" stroke-width="1"/>
<rect x="173" y="496.5" width="9" height="4" fill="#fff" stroke="#222" stroke-width="1"/>
<rect x="290" y="496.5" width="10" height="4" fill="#fff" stroke="#222" stroke-width="1"/>
<rect x="447" y="496.5" width="11" height="4" fill="#fff" stroke="#222" stroke-width="1"/>
<rect x="644" y="496.5" width="12" height="4" fill="#fff" stroke="#222" stroke-width="1"/>
<rect x="803" y="496.5" width="10" height="4" fill="#fff" stroke="#222" stroke-width="1"/>
<rect x="919" y="496.5" width="9" height="4" fill="#fff" stroke="#222" stroke-width="1"/>
<rect x="986" y="496.5" width="9" height="4" fill="#fff" stroke="#222" stroke-width="1"/>
<rect x="110" y="504.5" width="9" height="4" fill="#fff" stroke="#222" stroke-width="1"/>
<rect x="173" y="504.5" width="9" height="4" fill="#fff" stroke="#222" stroke-width="1"/>
<rect x="290" y="504.5" width="10" height="4" fill="#fff" stroke="#222" stroke-width="1"/>
<rect x="446" y="504.5" width="12" height="4" fill="#fff" stroke="#222" stroke-width="1"/>
<rect x="644" y="504.5" width="12" height="4" fill="#fff" stroke="#222" stroke-width="1"/>
<rect x="802" y="504.5" width="11" height="4" fill="#fff" stroke="#222" stroke-width="1"/>
<rect x="919" y="504.5" width="9" height="4" fill="#fff" stroke="#222" stroke-width="1"/>
<rect x="987" y="504.5" width="9" height="4" fill="#fff" stroke="#222" stroke-width="1"/>
<path d="M104.5 531 H237 M104.5 541 H355 M104.5 525 V545 M237 524 V534 M355 534 V544" fill="none" stroke="#2a8a2a" stroke-width="1"/>
<rect x="164.5" y="526" width="11" height="3.5" fill="#fff" stroke="#2a8a2a" stroke-width="1"/>
<rect x="222" y="536" width="15" height="3.5" fill="#fff" stroke="#2a8a2a" stroke-width="1"/>
<path d="M104.5 551.5 H537" stroke="#444" stroke-width="1.2"/>
<path d="M104.5 562.5 H735 M104.5 572.5 H853" stroke="#2a8a2a" stroke-width="2"/>
<rect x="320" y="546" width="16" height="4.5" fill="#fff" stroke="#222" stroke-width="1.1"/>
<rect x="419.5" y="557" width="15" height="3.5" fill="#fff" stroke="#2a8a2a" stroke-width="1"/>
<rect x="478.5" y="567.5" width="15" height="3.5" fill="#fff" stroke="#2a8a2a" stroke-width="1"/>
<path d="M104.5 546 V577" stroke="#222" stroke-width="1"/>
<rect x="105.5" y="550.5" width="27" height="27" fill="#dcdcdc" stroke="#6a6a6a" stroke-width="1"/>
<g shape-rendering="geometricPrecision">
<path d="M112.5 563 V560 A4.5 4.5 0 0 1 121.5 560 V563" fill="none" stroke="#111" stroke-width="2"/>
<rect x="109.5" y="562.5" width="15.5" height="12.5" rx="3" fill="#f59d1a" stroke="#222" stroke-width="1.2"/>
<circle cx="117.2" cy="567.3" r="1.9" fill="#111"/><path d="M117.2 567 V572.5" stroke="#111" stroke-width="1.8"/>
</g>
<rect x="221.5" y="550.5" width="27" height="27" fill="#dcdcdc" stroke="#6a6a6a" stroke-width="1"/>
<g shape-rendering="geometricPrecision">
<path d="M228.5 563 V560 A4.5 4.5 0 0 1 237.5 560 V563" fill="none" stroke="#111" stroke-width="2"/>
<rect x="225.5" y="562.5" width="15.5" height="12.5" rx="3" fill="#f59d1a" stroke="#222" stroke-width="1.2"/>
<circle cx="233.2" cy="567.3" r="1.9" fill="#111"/><path d="M233.2 567 V572.5" stroke="#111" stroke-width="1.8"/>
</g>
<rect x="340.5" y="550.5" width="27" height="27" fill="#dcdcdc" stroke="#6a6a6a" stroke-width="1"/>
<g shape-rendering="geometricPrecision">
<path d="M347.5 563 V560 A4.5 4.5 0 0 1 356.5 560 V563" fill="none" stroke="#111" stroke-width="2"/>
<rect x="344.5" y="562.5" width="15.5" height="12.5" rx="3" fill="#f59d1a" stroke="#222" stroke-width="1.2"/>
<circle cx="352.2" cy="567.3" r="1.9" fill="#111"/><path d="M352.2 567 V572.5" stroke="#111" stroke-width="1.8"/>
</g>
<rect x="734.5" y="550.5" width="27" height="27" fill="#dcdcdc" stroke="#6a6a6a" stroke-width="1"/>
<g shape-rendering="geometricPrecision">
<path d="M741.5 563 V560 A4.5 4.5 0 0 1 750.5 560 V563" fill="none" stroke="#111" stroke-width="2"/>
<rect x="738.5" y="562.5" width="15.5" height="12.5" rx="3" fill="#f59d1a" stroke="#222" stroke-width="1.2"/>
<circle cx="746.2" cy="567.3" r="1.9" fill="#111"/><path d="M746.2 567 V572.5" stroke="#111" stroke-width="1.8"/>
</g>
<rect x="853.5" y="550.5" width="27" height="27" fill="#dcdcdc" stroke="#6a6a6a" stroke-width="1"/>
<g shape-rendering="geometricPrecision">
<path d="M860.5 563 V560 A4.5 4.5 0 0 1 869.5 560 V563" fill="none" stroke="#111" stroke-width="2"/>
<rect x="857.5" y="562.5" width="15.5" height="12.5" rx="3" fill="#f59d1a" stroke="#222" stroke-width="1.2"/>
<circle cx="865.2" cy="567.3" r="1.9" fill="#111"/><path d="M865.2 567 V572.5" stroke="#111" stroke-width="1.8"/>
</g>
<rect x="966.5" y="550.5" width="27" height="27" fill="#dcdcdc" stroke="#6a6a6a" stroke-width="1"/>
<g shape-rendering="geometricPrecision">
<path d="M973.5 563 V560 A4.5 4.5 0 0 1 982.5 560 V563" fill="none" stroke="#111" stroke-width="2"/>
<rect x="970.5" y="562.5" width="15.5" height="12.5" rx="3" fill="#f59d1a" stroke="#222" stroke-width="1.2"/>
<circle cx="978.2" cy="567.3" r="1.9" fill="#111"/><path d="M978.2 567 V572.5" stroke="#111" stroke-width="1.8"/>
</g>
<rect x="537.5" y="550.5" width="27" height="27" fill="#dcdcdc" stroke="#6a6a6a" stroke-width="1"/>
<g shape-rendering="geometricPrecision">
<path d="M555.5 563 V558.5 A4.5 4.5 0 0 1 564.5 558.5 V561" fill="none" stroke="#111" stroke-width="2"/>
<rect x="539.5" y="562.5" width="15.5" height="12.5" rx="3" fill="#d7f21a" stroke="#222" stroke-width="1.2"/>
<circle cx="547.2" cy="567.3" r="1.9" fill="#111"/><path d="M547.2 567 V572.5" stroke="#111" stroke-width="1.8"/>
</g>
<path d="M553 544 V549" stroke="#222" stroke-width="1"/>
<rect x="1062" y="334" width="7" height="141" fill="#111"/><rect x="1063" y="337" width="5" height="116" fill="#c8c8c8"/><rect x="1065" y="337" width="1" height="116" fill="#222"/><rect x="1064" y="455" width="3" height="18" fill="#d6d6d6"/>
<rect x="1051" y="451.5" width="8" height="32.5" rx="1" fill="#f5eed8" stroke="#111" stroke-width="1"/>
<path d="M1059 463 H1075 M1038 463 H1051" stroke="#111" stroke-width="0.8"/>
<rect x="1063" y="340" width="5" height="6" fill="#333"/>
<rect x="1063" y="359" width="5" height="6" fill="#333"/>
<rect x="1063" y="449" width="5" height="6" fill="#333"/>
<rect x="1037" y="453" width="3" height="8" fill="#fff" stroke="#2a8a2a" stroke-width="1"/><path d="M1040 448 V466 M1040 457 H1051 M1040 465 H1051" fill="none" stroke="#2a8a2a" stroke-width="1"/>
<rect x="1037" y="469" width="3" height="5" fill="#fff" stroke="#111" stroke-width="1"/><path d="M1040 467 V480 M1040 469 H1051 M1040 474 H1051" fill="none" stroke="#111" stroke-width="1"/>
<path d="M1055 485 V496 M1066 485 V496 M1055 490 H1066 M1052 495 H1070" fill="none" stroke="#2a8a2a" stroke-width="1"/>
</svg>
<!--/TOP2D-->
<!--BOT2D-->
<svg class="abs" style="left:0;top:0" width="1920" height="1040" viewBox="0 0 1920 1040" shape-rendering="crispEdges">
<rect x="209" y="681" width="741.5" height="247" fill="#d3d3d3" stroke="#111" stroke-width="1.3"/>
<path d="M209 700.7 H950 M209 908.3 H950 M229.8 681 V928 M930.7 681 V928" stroke="#111" stroke-width="1.3"/>
<path d="M226.8 678 L232.8 684" stroke="#111" stroke-width="1.2"/>
<path d="M226.8 925 L232.8 931" stroke="#111" stroke-width="1.2"/>
<path d="M927.7 678 L933.7 684" stroke="#111" stroke-width="1.2"/>
<path d="M927.7 925 L933.7 931" stroke="#111" stroke-width="1.2"/>
<path d="M206 697.7 L212 703.7" stroke="#111" stroke-width="1.2"/>
<path d="M947 697.7 L953 703.7" stroke="#111" stroke-width="1.2"/>
<path d="M206 905.3 L212 911.3" stroke="#111" stroke-width="1.2"/>
<path d="M947 905.3 L953 911.3" stroke="#111" stroke-width="1.2"/>
<text x="579.5" y="699" text-anchor="middle" font-family="Liberation Sans" font-size="10.5" fill="#222">3000</text>
<text x="579.5" y="906" text-anchor="middle" font-family="Liberation Sans" font-size="10.5" fill="#222">3000</text>
<text x="0" y="0" text-anchor="middle" font-family="Liberation Sans" font-size="10.5" fill="#222" transform="translate(227.5 804) rotate(-90)">1000</text>
<text x="0" y="0" text-anchor="middle" font-family="Liberation Sans" font-size="10.5" fill="#222" transform="translate(928.5 804) rotate(-90)">1000</text>
<rect x="191.2" y="693" width="11.5" height="253" fill="#2b1a12" stroke="#111" stroke-width="1"/>
<rect x="192.2" y="694" width="1.6" height="251" fill="#f2a286"/>
<rect x="200.1" y="694" width="1.6" height="251" fill="#f2a286"/>
<rect x="194.79999999999998" y="694" width="1.2" height="251" fill="#6b5548"/>
<rect x="957" y="693.5" width="11.5" height="252.5" fill="#2b1a12" stroke="#111" stroke-width="1"/>
<rect x="958" y="694.5" width="1.6" height="250.5" fill="#f2a286"/>
<rect x="965.9" y="694.5" width="1.6" height="250.5" fill="#f2a286"/>
<rect x="960.6" y="694.5" width="1.2" height="250.5" fill="#6b5548"/>
<rect x="191" y="935" width="777" height="11" fill="#2b1a12" stroke="#111" stroke-width="1"/>
<rect x="192" y="936" width="775" height="1.4" fill="#f2a286"/>
<rect x="192" y="943.6" width="775" height="1.4" fill="#f2a286"/>
<rect x="192" y="941.8" width="775" height="1.2" fill="#6b5548"/>
<rect x="191.2" y="693" width="11.5" height="18" fill="#f2a286" stroke="#111" stroke-width="1"/>
<rect x="192.2" y="710" width="9.5" height="19" fill="#111"/>
<circle cx="196.95" cy="710.5" r="3.6" fill="#f2a286" stroke="#111" stroke-width="1.3"/>
<rect x="192.2" y="909" width="9.5" height="26" fill="#111"/>
<circle cx="196.95" cy="928" r="3" fill="none" stroke="#f2a286" stroke-width="1"/>
<rect x="957" y="693" width="11.5" height="18" fill="#f2a286" stroke="#111" stroke-width="1"/>
<rect x="958" y="710" width="9.5" height="19" fill="#111"/>
<circle cx="962.75" cy="710.5" r="3.6" fill="#f2a286" stroke="#111" stroke-width="1.3"/>
<rect x="958" y="909" width="9.5" height="26" fill="#111"/>
<circle cx="962.75" cy="928" r="3" fill="none" stroke="#f2a286" stroke-width="1"/>
<rect x="191.2" y="935" width="11.5" height="11" fill="#f2a286" stroke="#111" stroke-width="1"/>
<path d="M192.2 945 L202.2 935" stroke="#111" stroke-width="0.9"/>
<rect x="957" y="935" width="11.5" height="11" fill="#f2a286" stroke="#111" stroke-width="1"/>
<path d="M957.5 935 L967.5 945" stroke="#111" stroke-width="0.9"/>
<rect x="203" y="936" width="25" height="9.5" fill="#0d0d0d"/>
<rect x="560" y="936" width="39" height="9.5" fill="#0d0d0d"/>
<rect x="931" y="936" width="26" height="9.5" fill="#0d0d0d"/>
<circle cx="579.5" cy="940.5" r="2.5" fill="#f2a286"/>
<circle cx="212" cy="940.5" r="2.3" fill="none" stroke="#f2a286" stroke-width="1"/>
<circle cx="948" cy="940.5" r="2.3" fill="none" stroke="#f2a286" stroke-width="1"/>
<path d="M209 695 H206 V725 H209 M209 913 H206 V928 M212 929 V931 H225 L227 929" fill="none" stroke="#111" stroke-width="1"/>
<path d="M950 698 H953 V729 H950 M950 913 H953 V928 M947 929 V931 H936 L934 929" fill="none" stroke="#111" stroke-width="1"/>
<path d="M565 929 H594 V931 Q594 932 592 932 H567 Q565 932 565 931 Z" fill="#fff" stroke="#111" stroke-width="1"/><path d="M578 932 V936 M581 932 V936" stroke="#111" stroke-width="0.9"/>
<path d="M202.7 713 H209 M957 715 H950" stroke="#111" stroke-width="1.3"/>
<path d="M147.3 672 V949 M147 681 H195 M147 710 H192 M147 928 H191 M147 940 H191" stroke="#111" stroke-width="1.2"/>
<path d="M143.8 677.5 L150.8 684.5" stroke="#111" stroke-width="1.2"/>
<path d="M143.8 706.5 L150.8 713.5" stroke="#111" stroke-width="1.2"/>
<path d="M143.8 924.5 L150.8 931.5" stroke="#111" stroke-width="1.2"/>
<path d="M143.8 936.5 L150.8 943.5" stroke="#111" stroke-width="1.2"/>
<text x="0" y="0" text-anchor="middle" font-family="Liberation Sans" font-size="10.5" fill="#222" transform="translate(146 691) rotate(-90)">117</text>
<text x="0" y="0" text-anchor="middle" font-family="Liberation Sans" font-size="10.5" fill="#222" transform="translate(146 819.5) rotate(-90)">883</text>
<text x="0" y="0" text-anchor="middle" font-family="Liberation Sans" font-size="10.5" fill="#222" transform="translate(146 934) rotate(-90)">50</text>
<path d="M1012.5 672 V948 M964 681 H1015 M967 715 H1015 M968 928 H1015 M968 940 H1015" stroke="#111" stroke-width="1.2"/>
<path d="M1009.0 677.5 L1016.0 684.5" stroke="#111" stroke-width="1.2"/>
<path d="M1009.0 711.5 L1016.0 718.5" stroke="#111" stroke-width="1.2"/>
<path d="M1009.0 924.5 L1016.0 931.5" stroke="#111" stroke-width="1.2"/>
<path d="M1009.0 936.5 L1016.0 943.5" stroke="#111" stroke-width="1.2"/>
<text x="0" y="0" text-anchor="middle" font-family="Liberation Sans" font-size="10.5" fill="#222" transform="translate(1011 706) rotate(-90)">137</text>
<text x="0" y="0" text-anchor="middle" font-family="Liberation Sans" font-size="10.5" fill="#222" transform="translate(1011 823) rotate(-90)">863</text>
<text x="0" y="0" text-anchor="middle" font-family="Liberation Sans" font-size="10.5" fill="#222" transform="translate(1011 932.5) rotate(-90)">50</text>
<path d="M188 989.7 H971 M196.7 946 V992 M209 929 V992 M579.5 946 V992 M949.6 929 V992 M962.3 946 V992" stroke="#111" stroke-width="1.2"/>
<path d="M193.2 986.2 L200.2 993.2" stroke="#111" stroke-width="1.2"/>
<path d="M205.5 986.2 L212.5 993.2" stroke="#111" stroke-width="1.2"/>
<path d="M576.0 986.2 L583.0 993.2" stroke="#111" stroke-width="1.2"/>
<path d="M946.1 986.2 L953.1 993.2" stroke="#111" stroke-width="1.2"/>
<path d="M958.8 986.2 L965.8 993.2" stroke="#111" stroke-width="1.2"/>
<text x="202" y="988" text-anchor="middle" font-family="Liberation Sans" font-size="10.5" fill="#222">50</text>
<text x="394.5" y="988" text-anchor="middle" font-family="Liberation Sans" font-size="10.5" fill="#222">1500</text>
<text x="764.5" y="988" text-anchor="middle" font-family="Liberation Sans" font-size="10.5" fill="#222">1500</text>
<text x="955.5" y="988" text-anchor="middle" font-family="Liberation Sans" font-size="10.5" fill="#222">50</text>
</svg>
<!--/BOT2D-->
<!--VIEW3D-->
<svg class="abs" style="left:0;top:0" width="1920" height="1040" viewBox="0 0 1920 1040">
<defs><filter id="tex" x="0" y="0" width="100%" height="100%"><feTurbulence type="fractalNoise" baseFrequency="0.18" numOctaves="2" seed="3"/><feColorMatrix type="matrix" values="0 0 0 0 0  0 0 0 0 0  0 0 0 0 0  0 0 0 0.9 -0.35"/><feComposite in2="SourceGraphic" operator="in"/><feBlend in="SourceGraphic" mode="multiply"/></filter></defs>
<polygon points="1150,400 1692,557 1692,600 1150,470" fill="#e6ebed" />
<polygon points="1151,384 1235,315 1235,438 1151,509" fill="#d9dde0" />
<polygon points="1712,552 1798,479 1798,606 1712,678" fill="#d9dde0" />
<polygon points="1153,530.5 1258,440.5 1805,603 1701,685" fill="#babec1" />
<polygon points="1153,530.5 1701,685 1701,732.5 1153,576" fill="#c9c7c6" />
<polygon points="1701,685 1805,603 1805,642 1701,732.5" fill="#9e9e9e" />
<polygon points="1153,530.5 1701,685 1701,697 1153,543" fill="#b9b7b5" />
<polygon points="1258,441 1270,444 1262,450 1252,447" fill="#a8abad" />
<path d="M1262 502 L1321 459" stroke="#979ca0" stroke-width="3.5" stroke-linecap="butt"/>
<path d="M1280 509 L1334 462" stroke="#979ca0" stroke-width="4" stroke-linecap="butt"/>
<path d="M1252 505 L1166 523" stroke="#979ca0" stroke-width="3.5" stroke-linecap="butt"/>
<path d="M1270 514 L1182 529" stroke="#979ca0" stroke-width="3" stroke-linecap="butt"/>
<path d="M1274 507 L1790 652" stroke="#979ca0" stroke-width="4.5" stroke-linecap="butt"/>
<path d="M1270 516 L1780 662" stroke="#979ca0" stroke-width="4" stroke-linecap="butt"/>
<polygon points="1246,499 1262,497 1266,505 1250,507" fill="#979ca0" />
<polygon points="1262,513 1280,511 1283,520 1265,522" fill="#979ca0" />
<polygon points="1150,400 1692,557 1692,682 1150,527" fill="rgba(210,225,232,0.12)" />
<g filter="url(#tex)" opacity="0.22"><polygon points="1153,530.5 1258,440.5 1805,603 1701,685" fill="#babec1" /><polygon points="1153,530.5 1701,685 1701,732.5 1153,576" fill="#c9c7c6" /></g>
<rect x="1234" y="288" width="7" height="172" rx="2" fill="#4d5866"/>
<rect x="1235.5" y="290" width="1.6" height="168" fill="#6d7886"/>
<path d="M1159 373 L1237 309" stroke="#56626f" stroke-width="4" stroke-linecap="round"/>
<path d="M1159 372 L1237 308" stroke="#8995a1" stroke-width="0.9"/>
<path d="M1162 504 L1236 439" stroke="#56626f" stroke-width="4" stroke-linecap="round"/>
<path d="M1162 503 L1236 438" stroke="#8995a1" stroke-width="0.9"/>
<rect x="1228" y="330" width="9" height="9" rx="3" fill="#c9c9c9" stroke="#8a8a8a" stroke-width="0.8"/>
<rect x="1228" y="451" width="9" height="8" rx="3" fill="#c9c9c9" stroke="#8a8a8a" stroke-width="0.8"/>
<rect x="1797" y="456" width="7" height="190" rx="2" fill="#4d5866"/>
<rect x="1798.5" y="458" width="1.6" height="186" fill="#6d7886"/>
<path d="M1713 548 L1797 476" stroke="#56626f" stroke-width="4" stroke-linecap="round"/>
<path d="M1713 547 L1797 475" stroke="#8995a1" stroke-width="0.9"/>
<path d="M1713 677 L1797 606" stroke="#56626f" stroke-width="4" stroke-linecap="round"/>
<path d="M1713 676 L1797 605" stroke="#8995a1" stroke-width="0.9"/>
<rect x="1789" y="497" width="10" height="9" rx="3" fill="#c9c9c9" stroke="#8a8a8a" stroke-width="0.8"/>
<rect x="1789" y="581" width="10" height="9" rx="3" fill="#c9c9c9" stroke="#8a8a8a" stroke-width="0.8"/>
<rect x="1787" y="621" width="8" height="19" fill="#5a626b"/>
<rect x="1406" y="491" width="14" height="9" rx="3" fill="#c9c9c9" stroke="#8a8a8a" stroke-width="0.8"/>
<rect x="1422" y="493" width="14" height="9" rx="3" fill="#c9c9c9" stroke="#8a8a8a" stroke-width="0.8"/>
<rect x="1406" y="577" width="14" height="9" rx="3" fill="#c9c9c9" stroke="#8a8a8a" stroke-width="0.8"/>
<rect x="1422" y="579" width="14" height="9" rx="3" fill="#c9c9c9" stroke="#8a8a8a" stroke-width="0.8"/>
<rect x="1418" y="457" width="8" height="192" rx="2" fill="#4d5866"/>
<rect x="1419.5" y="459" width="1.6" height="188" fill="#6d7886"/>
<rect x="1413" y="624" width="18" height="18" fill="#4a5360"/>
<rect x="1141" y="376" width="10" height="196" rx="2" fill="#4d5866"/>
<rect x="1142.5" y="378" width="1.6" height="192" fill="#6d7886"/>
<rect x="1150" y="542" width="13" height="20" fill="#4a5360"/>
<rect x="1150" y="488" width="12" height="9" rx="3" fill="#c9c9c9" stroke="#8a8a8a" stroke-width="0.8"/>
<rect x="1150" y="355" width="10" height="9" rx="3" fill="#c9c9c9" stroke="#8a8a8a" stroke-width="0.8"/>
<rect x="1678" y="566" width="14" height="9" rx="3" fill="#c9c9c9" stroke="#8a8a8a" stroke-width="0.8"/>
<rect x="1699" y="563" width="12" height="9" rx="3" fill="#c9c9c9" stroke="#8a8a8a" stroke-width="0.8"/>
<rect x="1678" y="652" width="14" height="9" rx="3" fill="#c9c9c9" stroke="#8a8a8a" stroke-width="0.8"/>
<rect x="1699" y="649" width="12" height="9" rx="3" fill="#c9c9c9" stroke="#8a8a8a" stroke-width="0.8"/>
<rect x="1692" y="536" width="6" height="191" rx="2" fill="#4d5866"/>
<rect x="1693.5" y="538" width="1.6" height="187" fill="#6d7886"/>
<rect x="1707" y="535" width="6" height="190" rx="2" fill="#4d5866"/>
<rect x="1708.5" y="537" width="1.6" height="186" fill="#6d7886"/>
<rect x="1684" y="700" width="12" height="20" fill="#4a5360"/>
<path d="M1150 396 L1692 553" stroke="#56626f" stroke-width="4" stroke-linecap="round"/>
<path d="M1150 395 L1692 552" stroke="#8995a1" stroke-width="0.9"/>
<path d="M1152 527 L1692 682" stroke="#56626f" stroke-width="4" stroke-linecap="round"/>
<path d="M1152 526 L1692 681" stroke="#8995a1" stroke-width="0.9"/>
<path d="M1137 373 L1243 283" stroke="#8a8a8a" stroke-width="9.5" stroke-linecap="round"/>
<path d="M1137 372.2 L1243 282.2" stroke="#b3b3b3" stroke-width="6.5" stroke-linecap="round"/>
<path d="M1137 370.8 L1243 280.8" stroke="#d6d6d6" stroke-width="1.8" stroke-linecap="round"/>
<path d="M1137 373 L1707 535" stroke="#8a8a8a" stroke-width="9.5" stroke-linecap="round"/>
<path d="M1137 372.2 L1707 534.2" stroke="#b3b3b3" stroke-width="6.5" stroke-linecap="round"/>
<path d="M1137 370.8 L1707 532.8" stroke="#d6d6d6" stroke-width="1.8" stroke-linecap="round"/>
<path d="M1707 535 L1808 447" stroke="#8a8a8a" stroke-width="9.5" stroke-linecap="round"/>
<path d="M1707 534.2 L1808 446.2" stroke="#b3b3b3" stroke-width="6.5" stroke-linecap="round"/>
<path d="M1707 532.8 L1808 444.8" stroke="#d6d6d6" stroke-width="1.8" stroke-linecap="round"/>
</svg>
<!--/VIEW3D-->
</body></html>
